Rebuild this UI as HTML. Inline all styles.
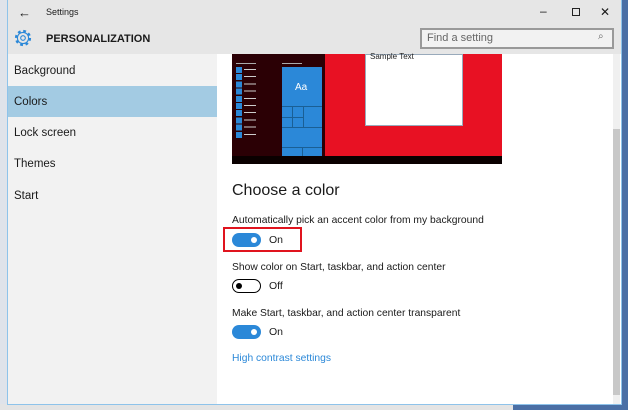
<!DOCTYPE html>
<html><head><meta charset="utf-8"><style>
*{margin:0;padding:0;box-sizing:border-box}
body{width:628px;height:410px;overflow:hidden;background:#fff;font-family:"Liberation Sans",sans-serif;position:relative}
.a{position:absolute}
.t{font-size:11.5px;color:#1a1a1a}
.sw{position:absolute;width:29px;height:14px;border-radius:7px}
.sw.on{background:#2b88d8}
.sw.on::after{content:"";position:absolute;right:4px;top:4px;width:6px;height:6px;border-radius:3px;background:#fff}
.sw.off{border:1.5px solid #000;background:#fff}
.sw.off::after{content:"";position:absolute;left:3px;top:2.5px;width:6px;height:6px;border-radius:3px;background:#000}
</style></head><body>
<div class="a" style="left:0;top:0;width:8px;height:410px;background:#dfe3ea"></div>
<div class="a" style="left:621px;top:0;width:7px;height:410px;background:#4a6fa5"></div>
<div class="a" style="left:0;top:404px;width:628px;height:6px;background:#e4e4e4"></div>
<div class="a" style="left:513px;top:404px;width:115px;height:6px;background:#4a6fa5"></div>
<div class="a" style="left:7px;top:0;width:615px;height:405px;border:1px solid #8ec3ea;background:#fff"></div>
<div class="a" style="left:8px;top:0;width:613px;height:54px;background:#e6e6e6"></div>
<div class="a t" style="left:18px;top:5px;font-size:13px">←</div>
<div class="a t" style="left:46px;top:7px;font-size:9px">Settings</div>
<div class="a t" style="left:540px;top:4px;font-size:12px">–</div>
<div class="a" style="left:572px;top:8px;width:8px;height:8px;border:1px solid #222"></div>
<div class="a t" style="left:600px;top:5px;font-size:12px">✕</div>
<svg class="a" style="left:13px;top:28px" width="20" height="20" viewBox="0 0 20 20"><circle cx="10" cy="10" r="7" fill="none" stroke="#2b88d8" stroke-width="2.2" stroke-dasharray="2.8 2.7"/><circle cx="10" cy="10" r="5.6" fill="none" stroke="#2b88d8" stroke-width="1.1"/><circle cx="10" cy="10" r="2.3" fill="none" stroke="#2b88d8" stroke-width="1.1"/></svg>
<div class="a t" style="left:46px;top:33px;font-size:11px;font-weight:bold">PERSONALIZATION</div>
<div class="a" style="left:420px;top:28px;width:194px;height:21px;border:2px solid #999;background:#f2f2f2"></div>
<div class="a" style="left:427px;top:32px;font-size:11px;color:#666">Find a setting</div>
<div class="a" style="left:598px;top:31px;font-size:10px;color:#666">⌕</div>
<div class="a" style="left:8px;top:54px;width:209px;height:350px;background:#f2f2f2"></div>
<div class="a" style="left:8px;top:86px;width:209px;height:31px;background:#a3cbe3"></div>
<div class="a t" style="left:14px;top:65px">Background</div>
<div class="a t" style="left:14px;top:96px">Colors</div>
<div class="a t" style="left:14px;top:127px">Lock screen</div>
<div class="a t" style="left:14px;top:158px">Themes</div>
<div class="a t" style="left:14px;top:190px">Start</div>
<div class="a" style="left:232px;top:54px;width:270px;height:110px;background:#e81123"></div>
<div class="a" style="left:232px;top:54px;width:93px;height:102px;background:#2b0005"></div>
<div class="a" style="left:232px;top:156px;width:270px;height:8px;background:#0a0000"></div>
<div class="a" style="left:236px;top:67px;width:6px;height:72px;background:repeating-linear-gradient(#2b88d8 0 6px,#2b0005 6px 7.2px)"></div>
<div class="a" style="left:244px;top:69px;width:12px;height:68px;background:repeating-linear-gradient(#ccc 0 1px,transparent 1px 7.2px)"></div>
<div class="a" style="left:236px;top:63px;width:20px;height:1px;background:#aaa"></div>
<div class="a" style="left:282px;top:63px;width:20px;height:1px;background:#aaa"></div>
<div class="a" style="left:282px;top:67px;width:40px;height:89px;background:#2b88d8"></div>
<div class="a" style="left:282px;top:106px;width:40px;height:1px;background:#1a5f95"></div>
<div class="a" style="left:282px;top:117px;width:22px;height:1px;background:#1a5f95"></div>
<div class="a" style="left:282px;top:127px;width:40px;height:1px;background:#1a5f95"></div>
<div class="a" style="left:282px;top:147px;width:40px;height:1px;background:#1a5f95"></div>
<div class="a" style="left:292px;top:107px;width:1px;height:20px;background:#1a5f95"></div>
<div class="a" style="left:303px;top:107px;width:1px;height:20px;background:#1a5f95"></div>
<div class="a" style="left:302px;top:147px;width:1px;height:9px;background:#1a5f95"></div>
<div class="a" style="left:295px;top:82px;font-size:10px;color:#fff">Aa</div>
<div class="a" style="left:365px;top:54px;width:98px;height:72px;background:#fff;border:1px solid #9ab"></div>
<div class="a" style="left:370px;top:52px;font-size:8px;color:#222">Sample Text</div>
<div class="a" style="left:232px;top:182px;font-size:16px;color:#1a1a1a">Choose a color</div>
<div class="a t" style="left:232px;top:215px;font-size:10.3px">Automatically pick an accent color from my background</div>
<div class="a" style="left:223px;top:227px;width:79px;height:25px;border:2px solid #e0141e"></div>
<div class="sw on" style="left:232px;top:233px"></div>
<div class="a t" style="left:269px;top:234px;font-size:10.5px">On</div>
<div class="a t" style="left:232px;top:262px;font-size:10.3px">Show color on Start, taskbar, and action center</div>
<div class="sw off" style="left:232px;top:279px"></div>
<div class="a t" style="left:269px;top:280px;font-size:10.5px">Off</div>
<div class="a t" style="left:232px;top:308px;font-size:10.3px">Make Start, taskbar, and action center transparent</div>
<div class="sw on" style="left:232px;top:325px"></div>
<div class="a t" style="left:269px;top:326px;font-size:10.5px">On</div>
<div class="a" style="left:232px;top:353px;font-size:10.3px;color:#2b88d8">High contrast settings</div>
<div class="a" style="left:613px;top:54px;width:7px;height:350px;background:#f0f0f0"></div>
<div class="a" style="left:613px;top:129px;width:7px;height:266px;background:#c8c8c8"></div>
</body></html>
